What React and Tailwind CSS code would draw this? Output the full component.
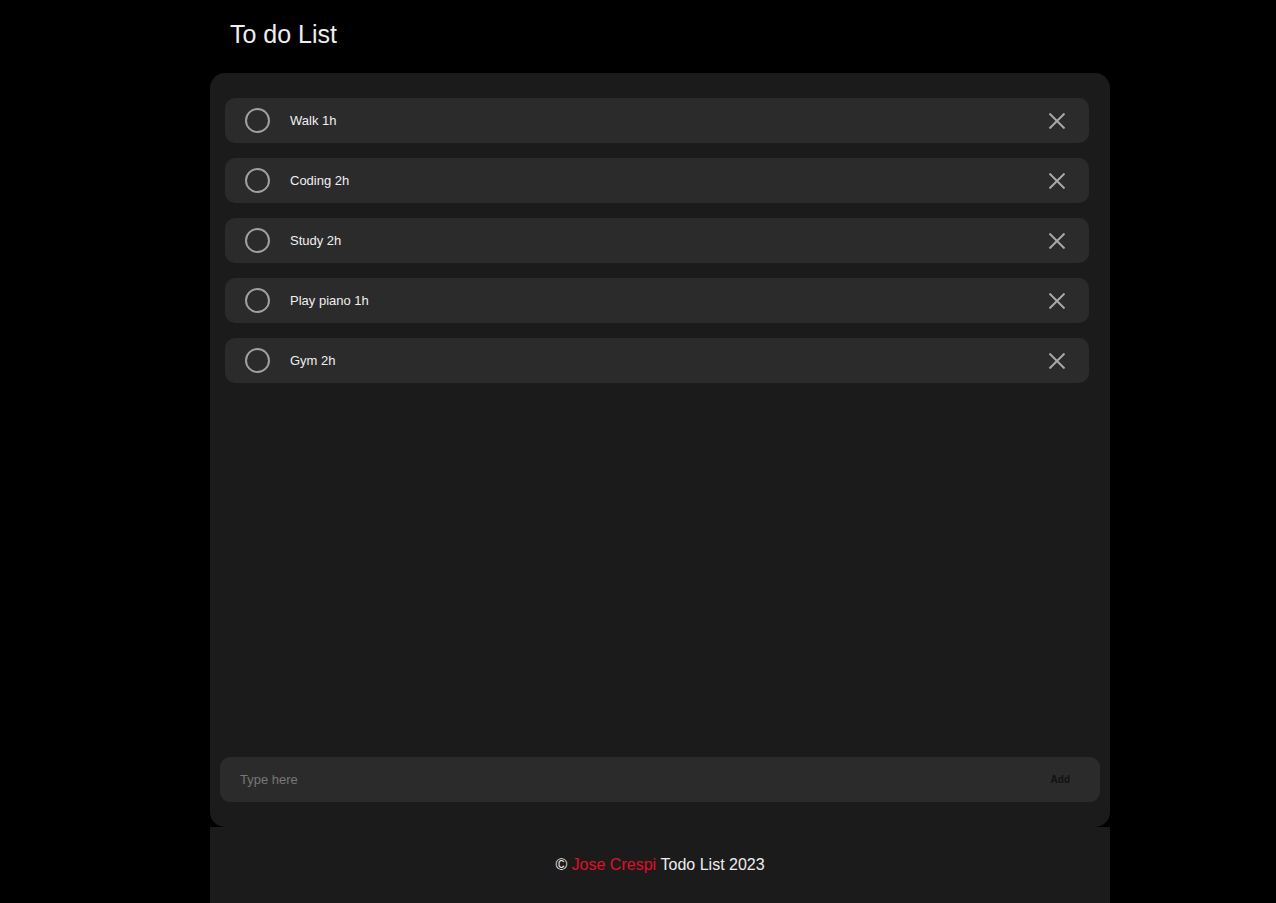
export default function App() {
  const todos = ["Walk 1h", "Coding 2h", "Study 2h", "Play piano 1h", "Gym 2h"];
  return (
    <div className="min-h-[903px] bg-black text-[#eeeeee]" style={{ fontFamily: '"Liberation Sans", Arial, sans-serif' }}>
      <div className="ml-[210px] w-[900px]">
        <h1 className="pl-5 pt-[20px] pb-[25px] text-[25px] leading-[28px] font-normal text-[#eeeeee]">To do List</h1>
        <div className="flex h-[754px] flex-col rounded-[15px] bg-[#1b1b1b] pt-[25px] pb-[25px]">
          <ul className="flex flex-1 flex-col gap-[15px] pl-[15px] pr-[21px]">
            {todos.map((t) => (
              <li key={t} className="flex h-[45px] items-center rounded-[10px] bg-[#2b2b2b] pl-[20px] pr-[24px]">
                <span className="h-[25px] w-[25px] rounded-full border-2 border-[#a0a0a0]" />
                <span className="ml-[20px] flex-1 text-[13px] text-[#f0f0f0]">{t}</span>
                <svg width="16" height="16" viewBox="0 0 16 16" className="text-[#a8a8a8]">
                  <path d="M0.5 0.5 L15.5 15.5 M15.5 0.5 L0.5 15.5" stroke="currentColor" strokeWidth="2" fill="none" />
                </svg>
              </li>
            ))}
          </ul>
          <div className="mx-[10px] flex h-[45px] items-center rounded-[10px] bg-[#2b2b2b] pl-[20px] pr-[30px]">
            <span className="flex-1 text-[13px] text-[#777777]">Type here</span>
            <span className="text-[10px] font-bold text-[#111111]">Add</span>
          </div>
        </div>
        <footer className="flex h-[76px] items-center justify-center bg-[#1b1b1b] text-[16px] text-[#eeeeee]">
          <span>©&nbsp;</span>
          <span className="text-[#e0102a]">Jose Crespi</span>
          <span>&nbsp;Todo List 2023</span>
        </footer>
      </div>
    </div>
  );
}
